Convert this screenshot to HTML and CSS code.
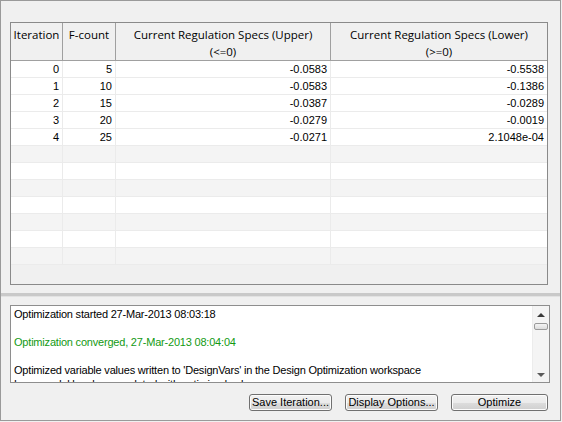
FILE: index.html
```html
<!DOCTYPE html>
<html lang="en">
  <head>
    <meta charset="UTF-8" />
    <title>Optimization Progress</title>
    <link rel="stylesheet" href="styles.css">
  </head>
  <body>
    <div class="window">
      <!-- Iteration table -->
      <div class="grid-frame">
        <table class="grid">
          <colgroup>
            <col class="col-iter">
            <col class="col-fcount">
            <col class="col-upper">
            <col class="col-lower">
          </colgroup>
          <thead>
            <tr>
              <th>Iteration</th>
              <th>F-count</th>
              <th>Current Regulation Specs (Upper)<br>(&lt;=0)</th>
              <th>Current Regulation Specs (Lower)<br>(&gt;=0)</th>
            </tr>
          </thead>
          <tbody>
            <tr><td>0</td><td>5</td><td>-0.0583</td><td>-0.5538</td></tr>
            <tr><td>1</td><td>10</td><td>-0.0583</td><td>-0.1386</td></tr>
            <tr><td>2</td><td>15</td><td>-0.0387</td><td>-0.0289</td></tr>
            <tr><td>3</td><td>20</td><td>-0.0279</td><td>-0.0019</td></tr>
            <tr><td>4</td><td>25</td><td>-0.0271</td><td>2.1048e-04</td></tr>
            <tr class="empty shade"><td></td><td></td><td></td><td></td></tr>
            <tr class="empty"><td></td><td></td><td></td><td></td></tr>
            <tr class="empty shade"><td></td><td></td><td></td><td></td></tr>
            <tr class="empty"><td></td><td></td><td></td><td></td></tr>
            <tr class="empty shade"><td></td><td></td><td></td><td></td></tr>
            <tr class="empty"><td></td><td></td><td></td><td></td></tr>
            <tr class="empty shade"><td></td><td></td><td></td><td></td></tr>
          </tbody>
        </table>
      </div>

      <!-- Splitter -->
      <div class="splitter"></div>

      <!-- Log -->
      <div class="log">
        <div class="log-text">
          <p>Optimization started 27-Mar-2013 08:03:18</p>
          <p class="blank">&nbsp;</p>
          <p class="ok">Optimization converged, 27-Mar-2013 08:04:04</p>
          <p class="blank">&nbsp;</p>
          <p>Optimized variable values written to 'DesignVars' in the Design Optimization workspace</p>
          <p>Loop model has been updated with optimized values</p>
        </div>
        <div class="scrollbar">
          <div class="arrow-up"></div>
          <div class="thumb"></div>
          <div class="track"></div>
          <div class="arrow-down"></div>
        </div>
      </div>

      <!-- Buttons -->
      <div class="actions">
        <button class="btn btn-save">Save Iteration...</button>
        <button class="btn btn-display">Display Options...</button>
        <button class="btn btn-optimize">Optimize</button>
      </div>
    </div>
  </body>
</html>
```
FILE: styles.css
```css
/* Base */
* {
  margin: 0;
  padding: 0;
  box-sizing: border-box;
}

body {
  background: #f0f0f0;
  font-family: "Liberation Sans", Arial, sans-serif;
  font-size: 11px;
  color: #000;
}

.window {
  width: 561px;
  height: 421px;
  border: 1px solid #9a9a9a;
  background: #f0f0f0;
  display: flex;
  flex-direction: column;
}

/* Table */
.grid-frame {
  margin: 21px 12px 0 9px;
  height: 263px;
  border: 1px solid #8a8a8a;
  background: #f0f0f0;
  overflow: hidden;
}

.grid {
  width: 100%;
  table-layout: fixed;
  border-collapse: separate;
  border-spacing: 0;
}

.col-iter { width: 52px; }
.col-fcount { width: 53px; }
.col-upper { width: 215px; }

.grid th {
  font-family: "Open Sans", "Noto Sans", sans-serif;
  font-size: 11.5px;
  font-weight: normal;
  line-height: 17px;
  height: 38px;
  padding: 3px 2px 0;
  vertical-align: top;
  text-align: center;
  white-space: nowrap;
  border-right: 1px solid #a0a0a0;
  border-bottom: 1px solid #a0a0a0;
  background: #f0f0f0;
}

.grid th:last-child {
  border-right: none;
}

.grid td {
  height: 17px;
  padding: 0 3px 0 0;
  line-height: 16px;
  text-align: right;
  background: #fff;
  border-right: 1px solid #ebebeb;
  border-bottom: 1px solid #ebebeb;
}

.grid td:last-child {
  border-right: none;
}

.grid tr.shade td {
  background: #f4f4f4;
}

/* Splitter */
.splitter {
  margin-top: 8px;
  height: 4px;
  background: #c9c9c9;
  border-bottom: 1px solid #e2e2e2;
}

/* Log */
.log {
  margin: 8px 10px 0 9px;
  height: 78px;
  border: 1px solid #8e8e8e;
  background: #fff;
  display: flex;
  overflow: hidden;
}

.log-text {
  flex: 1;
  padding: 1px 0 0 3px;
  line-height: 14px;
  letter-spacing: -0.2px;
  white-space: nowrap;
  overflow: hidden;
}

.log-text .ok {
  color: #139a13;
}

.scrollbar {
  width: 17px;
  background: #f4f4f4;
  border-left: 1px solid #ececec;
  display: flex;
  flex-direction: column;
  align-items: center;
}

.arrow-up,
.arrow-down {
  width: 0;
  height: 0;
  border-left: 4px solid transparent;
  border-right: 4px solid transparent;
}

.arrow-up {
  margin-top: 7px;
  border-bottom: 4px solid #3a3a3a;
}

.arrow-down {
  margin-bottom: 5px;
  border-top: 4px solid #5a5a5a;
}

.thumb {
  margin-top: 6px;
  width: 14px;
  height: 7px;
  border: 1px solid #9a9a9a;
  border-radius: 2px;
  background: linear-gradient(to bottom, #f4f4f4, #dcdcdc);
}

.track {
  flex: 1;
}

/* Buttons */
.actions {
  margin: 11px 12px 0 0;
  display: flex;
  justify-content: flex-end;
  gap: 13px;
}

.btn {
  height: 17px;
  font-family: "Liberation Sans", Arial, sans-serif;
  font-size: 11px;
  line-height: 15px;
  color: #000;
  border: 1px solid #707070;
  border-radius: 3px;
  background: linear-gradient(to bottom, #f2f2f2 0%, #ebebeb 50%, #dddddd 51%, #cfcfcf 100%);
  box-shadow: inset 0 0 0 1px #fcfcfc;
}

.btn-save { width: 83px; }
.btn-display { width: 93px; }
.btn-optimize { width: 97px; }
```
